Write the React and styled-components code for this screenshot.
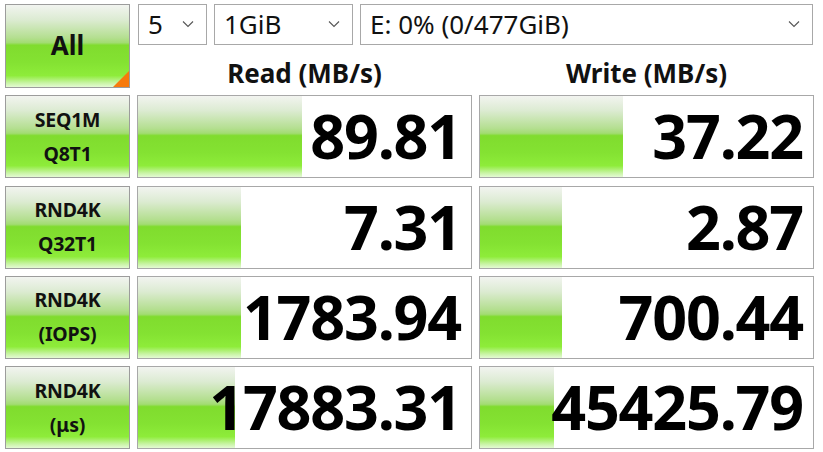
import React from "react";
import styled, { createGlobalStyle } from "styled-components";

const rows = [
  { l1: "SEQ1M", l2: "Q8T1", read: "89.81", rb: 164, write: "37.22", wb: 143 },
  { l1: "RND4K", l2: "Q32T1", read: "7.31", rb: 103, write: "2.87", wb: 82 },
  { l1: "RND4K", l2: "(IOPS)", read: "1783.94", rb: 103, write: "700.44", wb: 82 },
  { l1: "RND4K", l2: "(μs)", read: "17883.31", rb: 97, write: "45425.79", wb: 74 },
];

const green = `linear-gradient(to bottom, #f2f4f0 0%, #dcebd2 18%, #b4df90 40%, #a2dc72 46%, #80dc2e 49%, #84e232 70%, #8eec3a 86%, #c8f4a4 95%, #e4fad4 100%)`;

const Global = createGlobalStyle`
  body {
    margin: 0;
    background: #fff;
    font-family: "Noto Sans", "Open Sans", sans-serif;
  }
`;

const Window = styled.div`
  width: 823px;
  height: 452px;
  box-sizing: border-box;
  padding: 4px 0 0 5px;
  display: grid;
  grid-template-columns: 125px 335px 335px;
  grid-template-rows: 84px repeat(4, 83px);
  column-gap: 7px;
  row-gap: 7.3px;
  background: #fff;
`;

const GreenBox = styled.div`
  box-sizing: border-box;
  border: 1px solid #9c9c9c;
  background: ${green};
  display: flex;
  flex-direction: column;
  align-items: center;
  justify-content: center;
  font-weight: 700;
  color: #111;
`;

const AllButton = styled(GreenBox)`
  position: relative;
  font-size: 26px;
  padding-bottom: 2px;
  overflow: hidden;
  &::after {
    content: "";
    position: absolute;
    right: 0;
    bottom: 0;
    width: 0;
    height: 0;
    border-style: solid;
    border-width: 0 0 16px 16px;
    border-color: transparent transparent #f77a0c transparent;
  }
`;

const Label = styled(GreenBox)`
  font-size: 19.5px;
  line-height: 34px;
  letter-spacing: -0.2px;
`;

const Top = styled.div`
  grid-column: 2 / 4;
  display: flex;
  flex-direction: column;
`;

const Selects = styled.div`
  display: flex;
  gap: 7px;
  padding-left: 1px;
`;

const Select = styled.div`
  box-sizing: border-box;
  width: ${(p) => p.$w}px;
  height: 41px;
  border: 1px solid #a8a8a8;
  display: flex;
  align-items: center;
  justify-content: space-between;
  padding: 0 12px 2px 9px;
  font-size: 26px;
  color: #111;
  svg {
    flex: none;
  }
`;

const Headers = styled.div`
  display: grid;
  grid-template-columns: 335px 335px;
  column-gap: 7px;
  padding-top: 13px;
`;

const Header = styled.div`
  text-align: center;
  font-size: 26px;
  font-weight: 700;
  color: #111;
  line-height: 30px;
`;

const Value = styled.div`
  box-sizing: border-box;
  border: 1px solid #a8a8a8;
  background: ${green} no-repeat, #fff;
  background-size: ${(p) => p.$bar}px 100%, 100% 100%;
  display: flex;
  align-items: center;
  justify-content: flex-end;
  padding: 0 10px 2px 0;
  font-size: 61px;
  font-weight: 700;
  letter-spacing: -1.2px;
  color: #000;
  line-height: 1;
`;

const Chevron = () => (
  <svg width="12" height="8" viewBox="0 0 12 8">
    <path d="M1 1.5 L6 6.5 L11 1.5" fill="none" stroke="#555" strokeWidth="1.1" />
  </svg>
);

export default function App() {
  return (
    <>
      <Global />
      <Window>
        <AllButton>All</AllButton>
        <Top>
          <Selects>
            <Select $w={69}>
              <span>5</span>
              <Chevron />
            </Select>
            <Select $w={139}>
              <span>1GiB</span>
              <Chevron />
            </Select>
            <Select $w={453}>
              <span>E: 0% (0/477GiB)</span>
              <Chevron />
            </Select>
          </Selects>
          <Headers>
            <Header>Read (MB/s)</Header>
            <Header>Write (MB/s)</Header>
          </Headers>
        </Top>
        {rows.map((r, i) => (
          <React.Fragment key={i}>
            <Label>
              <span>{r.l1}</span>
              <span>{r.l2}</span>
            </Label>
            <Value $bar={r.rb}>{r.read}</Value>
            <Value $bar={r.wb}>{r.write}</Value>
          </React.Fragment>
        ))}
      </Window>
    </>
  );
}
